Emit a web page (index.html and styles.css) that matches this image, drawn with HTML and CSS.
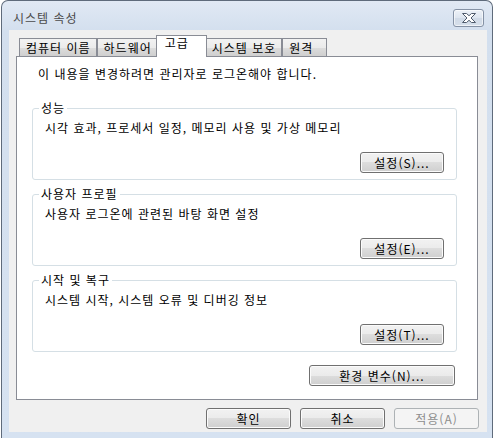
FILE: index.html
```html
<!DOCTYPE html>
<html lang="ko">
<head>
  <meta charset="UTF-8">
  <title>시스템 속성</title>
  <link rel="stylesheet" href="styles.css">
</head>
<body>
  <div class="window">
    <div class="titlebar">
      <span class="title">시스템 속성</span>
      <button class="close-btn" aria-label="닫기">
        <svg width="16" height="10" viewBox="0 0 16 10">
          <path d="M1.5 0.5h4l2.5 2.2 2.5-2.2h4l-4.5 4.5 4.5 4.5h-4l-2.5-2.2-2.5 2.2h-4l4.5-4.5z" fill="#fff" stroke="#4f5b6c" stroke-width="1" stroke-linejoin="round"/>
        </svg>
      </button>
    </div>
    <div class="client">
      <div class="tabs">
        <div class="tab">컴퓨터 이름</div>
        <div class="tab">하드웨어</div>
        <div class="tab active">고급</div>
        <div class="tab">시스템 보호</div>
        <div class="tab">원격</div>
      </div>
      <div class="panel">
        <p class="notice">이 내용을 변경하려면 관리자로 로그온해야 합니다.</p>
        <fieldset class="group">
          <legend>성능</legend>
          <p>시각 효과, 프로세서 일정, 메모리 사용 및 가상 메모리</p>
          <div class="group-actions"><button class="btn">설정(S)...</button></div>
        </fieldset>
        <fieldset class="group">
          <legend>사용자 프로필</legend>
          <p>사용자 로그온에 관련된 바탕 화면 설정</p>
          <div class="group-actions"><button class="btn">설정(E)...</button></div>
        </fieldset>
        <fieldset class="group">
          <legend>시작 및 복구</legend>
          <p>시스템 시작, 시스템 오류 및 디버깅 정보</p>
          <div class="group-actions"><button class="btn">설정(T)...</button></div>
        </fieldset>
        <div class="env-row"><button class="btn btn-wide">환경 변수(N)...</button></div>
      </div>
      <div class="dialog-actions">
        <button class="btn btn-dialog">확인</button>
        <button class="btn btn-dialog">취소</button>
        <button class="btn btn-dialog" disabled>적용(A)</button>
      </div>
    </div>
  </div>
</body>
</html>
```

FILE: styles.css
```css
body {
  margin: 0;
  background: #fff;
  font-family: "Noto Sans CJK KR", "Noto Sans", sans-serif;
  font-size: 12px;
  letter-spacing: 1px;
  color: #000;
}
.window {
  margin-left: 1px;
  width: 492px;
  box-sizing: border-box;
  border: 1px solid #5f6b7b;
  border-bottom: none;
  border-radius: 7px 7px 0 0;
  background: linear-gradient(#e1e9f4, #d3dfee 30px, #d6e2f1);
  padding: 0 5px 6px 7px;
  display: flex;
  flex-direction: column;
}
.titlebar {
  height: 29px;
  box-sizing: border-box;
  padding: 5px 3px 0 4px;
  display: flex;
  align-items: center;
  justify-content: space-between;
}
.title {
  color: #4a4a4a;
  line-height: 14px;
}
.close-btn {
  width: 31px;
  height: 18px;
  padding: 0;
  border: 1px solid #8592a5;
  border-radius: 3px;
  background: linear-gradient(#edf2f8, #dde5ef 50%, #d0dae7 50%, #d6dfea);
  box-shadow: inset 0 0 0 1px rgba(255, 255, 255, 0.6);
  display: flex;
  align-items: center;
  justify-content: center;
}
.client {
  height: 402px;
  box-sizing: border-box;
  background: #f0f0f0;
  padding: 5px 9px 0 7px;
  display: flex;
  flex-direction: column;
}
.tabs {
  display: flex;
  align-items: flex-end;
  padding-left: 3px;
  margin-bottom: -1px;
}
.tab {
  height: 18px;
  min-width: 45px;
  box-sizing: border-box;
  margin-bottom: 1px;
  padding: 0 5px 0 6px;
  border: 1px solid #898c95;
  border-bottom: none;
  background: linear-gradient(#f2f2f2, #ebebeb 50%, #dddddd 50%, #cfcfcf);
  line-height: 17px;
  white-space: nowrap;
}
.tab.active {
  position: relative;
  z-index: 1;
  height: 22px;
  min-width: 51px;
  margin: 0 -2px 0 -2px;
  padding: 0 8px;
  background: #fff;
  line-height: 13px;
}
.panel {
  height: 344px;
  box-sizing: border-box;
  border: 1px solid #898c95;
  background: #fff;
  padding: 10px 20px 0 15px;
  display: flex;
  flex-direction: column;
}
.notice {
  margin: 0 0 20px 6px;
  line-height: 14px;
}
.group {
  margin: 0 0 7px;
  min-width: 0;
  padding: 6px 12px 6px;
  border: 1px solid #d5dfe5;
  border-radius: 3px;
}
.group legend {
  margin-left: -6px;
  padding: 0 2px;
  line-height: 14px;
}
.group p {
  margin: 0;
  line-height: 14px;
}
.group-actions {
  display: flex;
  justify-content: flex-end;
  margin-top: 17px;
}
.btn {
  width: 84px;
  height: 21px;
  padding: 0;
  border: 1px solid #707070;
  border-radius: 3px;
  background: linear-gradient(#f2f2f2, #ebebeb 50%, #dddddd 50%, #cfcfcf);
  box-shadow: inset 0 0 0 1px #fbfbfb;
  font-family: inherit;
  font-size: 12px;
  letter-spacing: 1px;
  line-height: 14px;
  color: #000;
}
.btn-wide {
  width: 146px;
}
.btn:disabled {
  border-color: #adb2b5;
  background: #f4f4f4;
  box-shadow: none;
  color: #8d8d8d;
}
.env-row {
  display: flex;
  justify-content: flex-end;
  margin-top: 6px;
  padding-right: 2px;
}
.dialog-actions {
  display: flex;
  justify-content: flex-end;
  gap: 9px;
  margin: 8px -1px 0 0;
}
.btn-dialog {
  width: 85px;
}
```
